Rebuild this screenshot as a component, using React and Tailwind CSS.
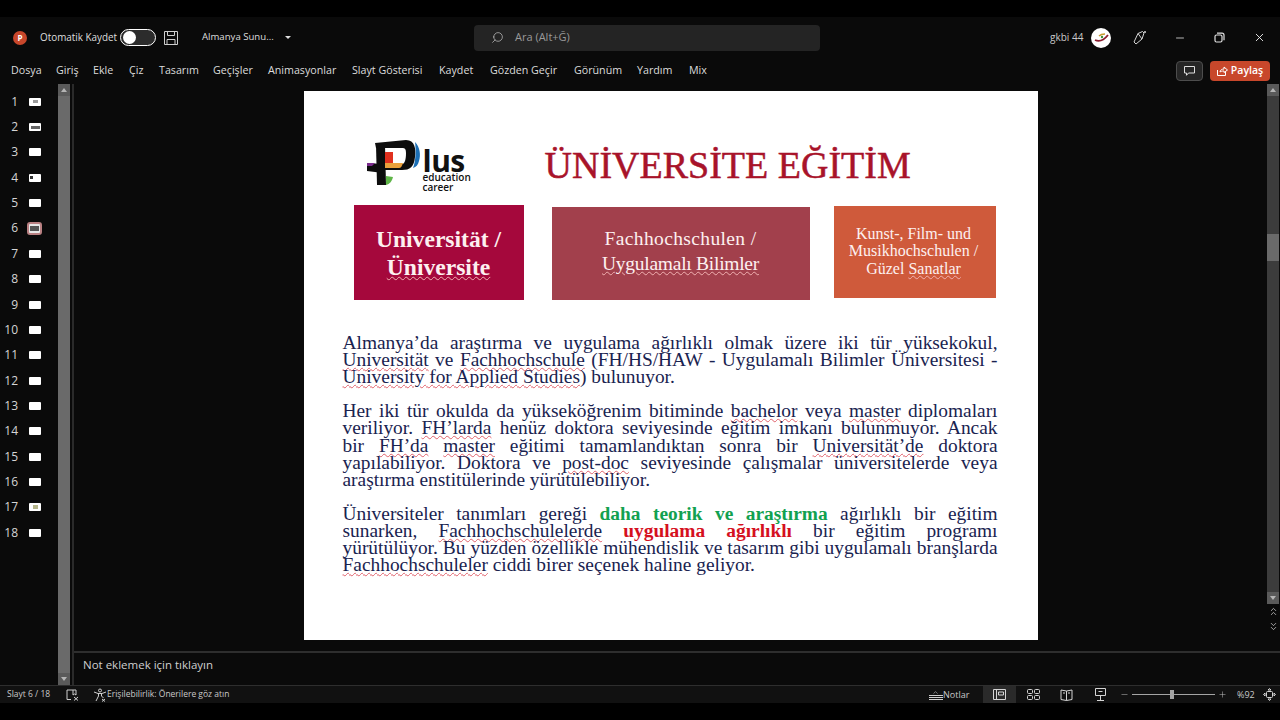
import { Search, Minus, X, Plus, ChevronDown, ChevronUp } from "lucide-react";

const tabs = [
  ["Dosya", "w-[45px]"], ["Giriş", "w-[37px]"], ["Ekle", "w-[36px]"], ["Çiz", "w-[30px]"], ["Tasarım", "w-[54px]"], ["Geçişler", "w-[55px]"],
  ["Animasyonlar", "w-[84px]"], ["Slayt Gösterisi", "w-[87px]"], ["Kaydet", "w-[51px]"], ["Gözden Geçir", "w-[84px]"], ["Görünüm", "w-[63px]"], ["Yardım", "w-[52px]"], ["Mix", "w-[20px]"],
];
const slides = Array.from({ length: 18 }, (_, i) => i + 1);

// red squiggle of the spell checker
const W = ({ children }) => <span className="underline decoration-wavy decoration-[#e0606a] decoration-1 underline-offset-1">{children}</span>;

// same squiggle on the coloured boxes
const BoxW = ({ children }) => <span className="underline decoration-wavy decoration-[#f0b0b0] decoration-1 underline-offset-1">{children}</span>;

// one justified line of the slide body
const Line = ({ children, last }) => (
  <div className={last ? "h-[17.1px] leading-[17px] whitespace-nowrap" : "h-[17.1px] leading-[17px] whitespace-nowrap text-justify [text-align-last:justify]"}>{children}</div>
);

const Scrollbar = ({ className, children }) => (
  <div className={"w-3 flex flex-col bg-[#3c3c3c] shrink-0 " + className}>{children}</div>
);
const ArrowBtn = ({ up }) => (
  <div className="h-3 bg-[#5a5a5a] flex items-center justify-center shrink-0">
    <div className={up ? "w-0 h-0 border-x-[3px] border-x-transparent border-b-[4px] border-b-[#b5b5b5]" : "w-0 h-0 border-x-[3px] border-x-transparent border-t-[4px] border-t-[#b5b5b5]"}></div>
  </div>
);

const Logo = () => (
  <svg width="55" height="50" viewBox="0 0 55 50" className="shrink-0">
    <path d="M49 3 C54 8 55 16 53 22 C52 26 50 28 47 29 C50 22 50 10 49 3 Z" fill="#1c6fb5" />
    <path d="M9 4 L40 1 C49 1 50 10 49 18 C48 28 44 31 36 31 L18 31 V25 L36 25 C39 25 40 20 40 14 C40 10 39 9 36 9 L10 9 Z" fill="#0d0d0d" />
    <path d="M10 6 L19 6 L20 46 L11 46 Z" fill="#0d0d0d" />
    <path d="M1 24 L17 25 V34 L1 32 Z" fill="#0d0d0d" />
    <rect x="19" y="13" width="8" height="12" fill="#e0301e" />
    <path d="M19 24 H37 C36 27 35 29 33 29 H19 Z" fill="#eba13c" />
    <path d="M1 24 L9 24 L6 27 L1 27 Z" fill="#7a2b8c" />
    <path d="M20 37 L27 38 C26 42 24 45 20 46 Z" fill="#5fb548" />
  </svg>
);

const thumbs = {
  1: "w-[5px] h-[3px] bg-[#999]", 2: "w-[9px] h-[3px] bg-[#666]", 4: "w-[3px] h-[3px] bg-[#333] -ml-[7px]", 17: "w-[5px] h-[4px] bg-[#b5b58a]",
};

export default function App() {
  return (
    <div className="w-[1280px] h-[720px] overflow-hidden bg-black flex flex-col text-[#e0e0e0] font-['Open_Sans','Noto_Sans',sans-serif]">
      <div className="h-[17px] shrink-0"></div>

      {/* title bar */}
      <div className="h-[41px] shrink-0 bg-[#0a0a0a] flex items-center text-[10.5px] whitespace-nowrap">
        <div className="w-[14px] h-[14px] rounded-full bg-[#c8472b] ml-[13px] flex items-center justify-center text-white text-[8px] font-bold shrink-0">P</div>
        <span className="ml-[13px] w-[80px] shrink-0 text-[#dedede] text-[9.9px]">Otomatik Kaydet</span>
        <div className="w-9 h-[17px] rounded-full border border-white bg-[#2c2c2c] flex items-center pl-[2px] shrink-0">
          <div className="w-[13px] h-[13px] rounded-full bg-white"></div>
        </div>
        <svg width="14" height="14" viewBox="0 0 14 14" fill="none" stroke="#cfcfcf" strokeWidth="1" className="ml-2 shrink-0">
          <path d="M.5.5h13v13H.5zM3.500.5v4h7v-4M3 13.500v-5h8v5" />
        </svg>
        <span className="ml-[24px] w-[83px] shrink-0 text-[#dedede] text-[9.6px]">Almanya Sunu...</span>
        <div className="w-0 h-0 border-x-[3px] border-x-transparent border-t-[3px] border-t-[#dedede] shrink-0"></div>
        <div className="ml-[183px] w-[346px] h-[26px] rounded bg-[#242424] flex items-center pl-[17px] text-[#9a9a9a] shrink-0">
          <Search size={13} strokeWidth={1.3} className="-scale-x-100 text-[#c5c5c5]" />
          <span className="ml-[11px] text-[11px]">Ara (Alt+Ğ)</span>
        </div>
        <span className="ml-[230px] w-[41px] shrink-0 text-[#c9c9c9] text-[10px]">gkbi 44</span>
        <div className="w-5 h-5 rounded-full bg-white flex items-center justify-center shrink-0">
          <svg width="15" height="13" viewBox="0 0 15 13" fill="none">
            <path d="M1 9 C5 11 10 9 14 4" stroke="#8a1c2e" strokeWidth="1.8" />
            <path d="M5 5 C7 3 9 3 11 3" stroke="#c99a2e" strokeWidth="1.500" />
            <circle cx="8" cy="6" r="1.200" fill="#3f8f3a" />
          </svg>
        </div>
        <svg width="15" height="15" viewBox="0 0 15 15" fill="none" stroke="#d6d6d6" strokeWidth="1" className="ml-[22px] shrink-0">
          <path d="M1 12l2 2 6-5 2-6-1.500-1.500L5 3.500zM5 3.500l4 5.500M12 1v2M11 2h2" />
        </svg>
        <Minus size={12} strokeWidth={1.6} className="ml-[26px] shrink-0 text-[#e2e2e2]" />
        <svg width="11" height="11" viewBox="0 0 11 11" fill="none" stroke="#e2e2e2" strokeWidth="1.2" className="ml-[28px] shrink-0">
          <rect x="1" y="3" width="7" height="7" rx="1.500" />
          <path d="M3 1.200h5a2 2 0 0 1 2 2v5" />
        </svg>
        <X size={13} strokeWidth={1.7} className="ml-[28px] shrink-0 text-[#ededed]" />
      </div>

      {/* ribbon tabs */}
      <div className="h-[26px] shrink-0 bg-[#0a0a0a] flex items-center text-[10.7px] pl-[11px] text-[#dcdcdc]">
        {tabs.map(([t, w]) => (
          <span key={t} className={"whitespace-nowrap pb-[2px] " + w}>{t}</span>
        ))}
        <div className="ml-auto mr-[10px] flex items-center gap-[7px]">
          <div className="w-[27px] h-5 rounded border border-[#4d4d4d] bg-[#262626] flex items-center justify-center">
            <svg width="11" height="10" viewBox="0 0 11 10" fill="none" stroke="#dedede" strokeWidth="1">
              <path d="M.5.5h10v6.500H4.500L2.500 9.300V7H.5z" />
            </svg>
          </div>
          <div className="w-[60px] h-5 rounded bg-[#c8472b] flex items-center justify-center gap-[3px] text-white text-[10.5px] font-semibold">
            <svg width="11" height="10" viewBox="0 0 11 10" fill="none" stroke="#fff" strokeWidth="1">
              <path d="M.5 4v5.500h8V6M3 6c0-2 2-3 4-3V1l3.500 3L7 6.500V5C5 5 4 5.300 3 6z" />
            </svg>
            Paylaş
          </div>
        </div>
      </div>

      {/* body */}
      <div className="flex-1 min-h-0 flex bg-[#0a0a0a]">
        <div className="w-[58px] shrink-0 pt-[5px] flex flex-col">
          {slides.map((n) => (
            <div key={n} className="h-[25.37px] flex items-center shrink-0">
              <span className="w-[27px] text-right pr-[9px] text-[12px] text-[#d5d5d5]">{n}</span>
              {n === 6 ? (
                <div className="w-[15px] h-[13px] rounded-[3px] border-2 border-[#b98082] bg-[#e8e8e8] flex items-center justify-center">
                  <div className="w-[9px] h-[5px] bg-[#555]"></div>
                </div>
              ) : (
                <div className="w-3 h-2 ml-[2px] rounded-[1px] bg-white flex items-center justify-center">
                  {thumbs[n] && <div className={thumbs[n]}></div>}
                </div>
              )}
            </div>
          ))}
        </div>
        <Scrollbar className="">
          <ArrowBtn up />
          <div className="flex-1 bg-[#6a6a6a]"></div>
          <ArrowBtn />
        </Scrollbar>
        <div className="w-[2px] bg-[#2a2a2a] ml-[2px] shrink-0"></div>

        <div className="flex-1 min-w-0 flex flex-col">
          <div className="flex-1 min-h-0 flex">
            <div className="flex-1 flex justify-center pt-[7px]">
              {/* slide */}
              <div className="w-[734px] h-[549px] bg-white font-['Liberation_Serif',serif] text-[#1a2350] shrink-0 flex flex-col pl-[39px] pr-[40px]">
                <div className="flex items-start h-[114px] shrink-0">
                  <div className="flex ml-[23px] mt-[48px] w-[106px] shrink-0">
                    <Logo />
                    <div className="ml-[2px] font-['Open_Sans',sans-serif] text-[#111] flex flex-col">
                      <span className="text-[30px] leading-[20px] mt-[12px] font-bold tracking-[-0.5px]">lus</span>
                      <span className="text-[10px] leading-[10px] mt-[1px] font-semibold">education</span>
                      <span className="text-[10px] leading-[10px] font-semibold">career</span>
                    </div>
                  </div>
                  <div className="ml-[73px] mt-[49px] text-[38px] leading-[50px] text-[#a8132a] whitespace-nowrap [-webkit-text-stroke:0.5px_#a8132a]">ÜNİVERSİTE EĞİTİM</div>
                </div>

                <div className="flex items-start h-[96px] shrink-0 ml-[11px] text-[#fdf0f0] text-center">
                  <div className="w-[170px] h-[95px] bg-[#a5083c] flex flex-col items-center justify-center font-bold text-[23.6px] leading-[28px]">
                    <span>Universität /</span>
                    <BoxW>Üniversite</BoxW>
                  </div>
                  <div className="w-[258px] h-[93px] ml-[28px] mt-[2px] pb-[5px] bg-[#a2404c] flex flex-col items-center justify-center text-[19.5px] leading-[25px]">
                    <span className="tracking-[0.37px]">Fachhochschulen /</span>
                    <span className="tracking-[-0.26px]"><BoxW>Uygulamalı Bilimler</BoxW></span>
                  </div>
                  <div className="w-[162px] h-[92px] ml-[24px] mt-[1px] pb-[2px] pr-[2px] bg-[#cf5a3b] flex flex-col items-center justify-center text-[16px] leading-[17.5px]">
                    <span>Kunst-, Film- und</span>
                    <span>Musikhochschulen /</span>
                    <span>Güzel <BoxW>Sanatlar</BoxW></span>
                  </div>
                </div>

                <div className="mt-[33px] text-[19.4px] flex flex-col">
                  <Line>Almanya’da araştırma ve uygulama ağırlıklı olmak üzere iki tür yüksekokul,</Line>
                  <Line><W>Universität</W> ve <W>Fachhochschule</W> (FH/HS/HAW - Uygulamalı Bilimler Üniversitesi -</Line>
                  <Line last><W>University for Applied Studies</W>) bulunuyor.</Line>
                  <div className="h-[17.1px]"></div>
                  <Line>Her iki tür okulda da yükseköğrenim bitiminde <W>bachelor</W> veya <W>master</W> diplomaları</Line>
                  <Line>veriliyor. <W>FH’larda</W> henüz doktora seviyesinde eğitim imkanı bulunmuyor. Ancak</Line>
                  <Line>bir <W>FH’da</W> <W>master</W> eğitimi tamamlandıktan sonra bir <W>Universität’de</W> doktora</Line>
                  <Line>yapılabiliyor. Doktora ve <W>post-doc</W> seviyesinde çalışmalar üniversitelerde veya</Line>
                  <Line last>araştırma enstitülerinde yürütülebiliyor.</Line>
                  <div className="h-[17.1px]"></div>
                  <Line>Üniversiteler tanımları gereği <b className="text-[#12a150]">daha teorik ve araştırma</b> ağırlıklı bir eğitim</Line>
                  <Line>sunarken, <W>Fachhochschulelerde</W> <b className="text-[#d5101e]">uygulama ağırlıklı</b> bir eğitim programı</Line>
                  <Line>yürütülüyor. Bu yüzden özellikle mühendislik ve tasarım gibi uygulamalı branşlarda</Line>
                  <Line last><W>Fachhochschuleler</W> ciddi birer seçenek haline geliyor.</Line>
                </div>
              </div>
            </div>
            <Scrollbar className="mr-px">
              <ArrowBtn up />
              <div className="h-[138px] shrink-0"></div>
              <div className="h-[27px] shrink-0 bg-[#6a6a6a]"></div>
              <div className="flex-1"></div>
              <ArrowBtn />
              <div className="h-[47px] shrink-0 -mx-px bg-[#0a0a0a] flex flex-col items-center pt-[1px] text-[#cfcfcf]">
                <ChevronUp size={9} strokeWidth={2} className="-mb-[5px]" />
                <ChevronUp size={9} strokeWidth={2} />
                <ChevronDown size={9} strokeWidth={2} className="mt-[2px] -mb-[5px]" />
                <ChevronDown size={9} strokeWidth={2} />
              </div>
            </Scrollbar>
          </div>

          {/* notes */}
          <div className="h-[34px] shrink-0 border-t-2 border-[#2e2e2e] flex items-start pt-[3px] pl-[9px] text-[11.5px] text-[#cfcfcf]">Not eklemek için tıklayın</div>
        </div>
      </div>

      {/* status bar */}
      <div className="h-[18px] shrink-0 bg-[#111] border-t border-[#2e2e2e] flex items-center text-[8.5px] text-[#c9c9c9]">
        <span className="ml-[7px] w-[59px]">Slayt 6 / 18</span>
        <svg width="13" height="12" viewBox="0 0 13 12" fill="none" stroke="#cfcfcf" strokeWidth="1">
          <path d="M5 10.500H1V1h9v5M7 1v5l1.500-1L10 6M8 8l4 3.500M12 8l-4 3.500" />
        </svg>
        <svg width="14" height="14" viewBox="0 0 14 14" fill="none" stroke="#cfcfcf" strokeWidth="1" className="ml-[14px]">
          <circle cx="7" cy="2.500" r="1.500" />
          <path d="M1 4l4 1.500h4L13 4M5.500 5.500V8L3 13M8.500 5.500V8l2 2M9 11l3 2.500M12 11l-3 2.500" />
        </svg>
        <span>Erişilebilirlik: Önerilere göz atın</span>

        <div className="ml-auto flex items-center h-full">
          <div className="flex flex-col gap-[1px] w-[15px] items-center">
            <ChevronUp size={7} strokeWidth={2} className="-mb-[2px]" />
            <div className="h-px w-[14px] bg-[#cfcfcf]"></div>
            <div className="h-px w-[14px] bg-[#cfcfcf]"></div>
            <div className="h-px w-[14px] bg-[#cfcfcf]"></div>
          </div>
          <span className="text-[9px] w-[40px]">Notlar</span>
          <div className="w-[33px] h-full bg-[#2a2a2a] flex items-center justify-center">
            <svg width="13" height="11" viewBox="0 0 13 11" fill="none" stroke="#d5d5d5" strokeWidth="1">
              <path d="M.5.5h12v10H.5zM3.500.5v10M5.500 3h5v3h-5z" />
            </svg>
          </div>
          <svg width="13" height="11" viewBox="0 0 13 11" fill="none" stroke="#d5d5d5" strokeWidth="1" className="ml-[11px]">
            <rect x=".5" y=".5" width="5" height="4" rx="1" />
            <rect x="7.500" y=".5" width="5" height="4" rx="1" />
            <rect x=".5" y="6.500" width="5" height="4" rx="1" />
            <rect x="7.500" y="6.500" width="5" height="4" rx="1" />
          </svg>
          <svg width="13" height="12" viewBox="0 0 13 12" fill="none" stroke="#d5d5d5" strokeWidth="1" className="ml-[20px]">
            <path d="M6.500 2L1 1v9.500l5.500 1 5.500-1V1zM6.500 2v9.500M3 4h2M8 4h2" />
          </svg>
          <svg width="13" height="13" viewBox="0 0 13 13" fill="none" stroke="#d5d5d5" strokeWidth="1" className="ml-[21px]">
            <path d="M1.500.5h10v7h-10zM6.500 7.500v5M3 12.500h7M4.500 3.500h4" />
          </svg>
          <Minus size={9} strokeWidth={1.3} className="ml-[13px]" />
          <div className="ml-[3px] w-[83px] h-px bg-[#a5a5a5] flex items-center">
            <div className="ml-[38px] w-[4px] h-[9px] bg-[#a5a5a5]"></div>
          </div>
          <Plus size={9} strokeWidth={1.3} className="ml-[3px]" />
          <span className="ml-[10px] w-[26px] text-[9px]">%92</span>
          <svg width="13" height="13" viewBox="0 0 13 13" fill="none" stroke="#d5d5d5" strokeWidth="1" className="mr-[4px]">
            <rect x="3.500" y="3.500" width="6" height="6" rx="1" />
            <path d="M6.500 0.500l-1.500 1.500h3zM6.500 12.500l-1.500-1.500h3zM0.500 6.500l1.500-1.500v3zM12.500 6.500l-1.500-1.500v3z" />
          </svg>
        </div>
      </div>
      <div className="h-[17px] shrink-0"></div>
    </div>
  );
}
